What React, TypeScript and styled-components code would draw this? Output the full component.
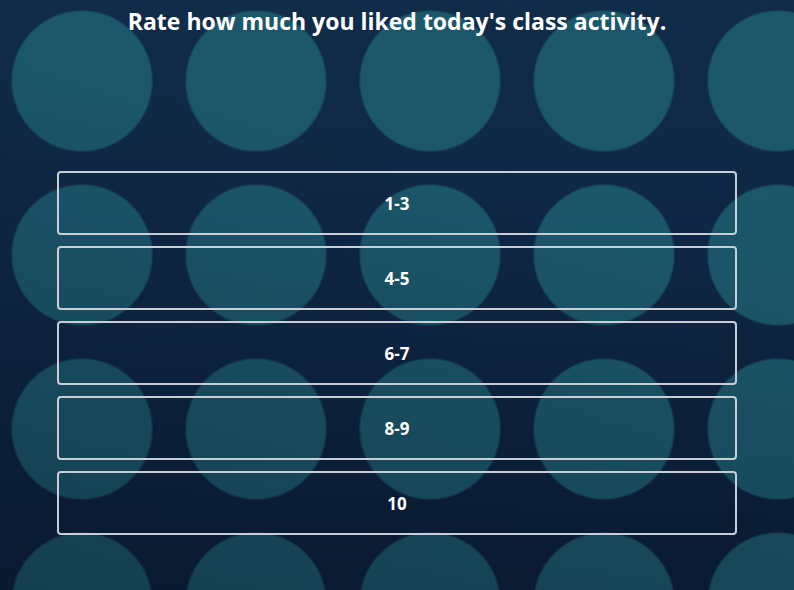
import React from "react";
import styled, { createGlobalStyle } from "styled-components";

const GlobalStyle = createGlobalStyle`
  html, body {
    margin: 0;
    padding: 0;
  }
  body {
    font-family: "Open Sans", "Liberation Sans", sans-serif;
  }
`;

const Stage = styled.div`
  width: 794px;
  height: 590px;
  overflow: hidden;
  background-color: #0d2340;
  background-image:
    linear-gradient(200deg, rgba(8, 22, 45, 0) 0%, rgba(8, 22, 45, 0) 35%, rgba(8, 22, 45, 0.3) 100%),
    radial-gradient(circle, rgba(40, 132, 142, 0.5) 69px, rgba(40, 132, 142, 0) 71.5px),
    linear-gradient(180deg, #102c49 0%, #0e2643 45%, #0a1b33 100%);
  background-size: 100% 100%, 174px 174px, 100% 100%;
  background-position: 0 0, -5px -6px, 0 0;
  display: flex;
  flex-direction: column;
  align-items: center;
`;

const Title = styled.h1`
  margin: 6px 0 0;
  font-size: 23px;
  line-height: 30px;
  font-weight: 700;
  color: #ffffff;
  text-align: center;
`;

const Options = styled.div`
  margin-top: 135px;
  width: 680px;
  display: flex;
  flex-direction: column;
  gap: 11px;
`;

const Option = styled.button`
  height: 64px;
  box-sizing: border-box;
  border: 2px solid #c9ced6;
  border-radius: 4px;
  background: transparent;
  color: #ffffff;
  font-family: "Open Sans", "Liberation Sans", sans-serif;
  font-size: 17px;
  font-weight: 700;
  display: flex;
  align-items: center;
  justify-content: center;
  padding: 0;
  cursor: pointer;
`;

const choices = ["1-3", "4-5", "6-7", "8-9", "10"];

export default function App() {
  return (
    <>
      <GlobalStyle />
      <Stage>
        <Title>Rate how much you liked today's class activity.</Title>
        <Options>
          {choices.map((c) => (
            <Option key={c}>{c}</Option>
          ))}
        </Options>
      </Stage>
    </>
  );
}
